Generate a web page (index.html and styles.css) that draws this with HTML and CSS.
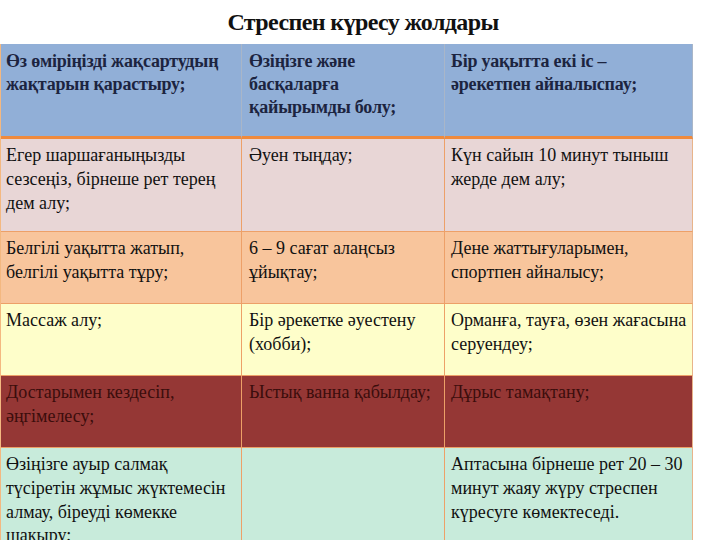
FILE: index.html
```html
<!DOCTYPE html>
<html>
<head>
<meta charset="utf-8">
<link rel="stylesheet" href="styles.css">
</head>
<body>
<h1 class="title">Стреспен күресу жолдары</h1>
<div class="grid">
  <div class="cell head">Өз өміріңізді жақсартудың жақтарын қарастыру;</div>
  <div class="cell head">Өзіңізге және басқаларға қайырымды болу;</div>
  <div class="cell head">Бір уақытта екі іс – әрекетпен айналыспау;</div>

  <div class="cell r2">Егер шаршағаныңызды сезсеңіз, бірнеше рет терең дем алу;</div>
  <div class="cell r2">Әуен тыңдау;</div>
  <div class="cell r2">Күн сайын 10 минут тыныш жерде дем алу;</div>

  <div class="cell r3">Белгілі уақытта жатып, белгілі уақытта тұру;</div>
  <div class="cell r3">6 – 9 сағат алаңсыз ұйықтау;</div>
  <div class="cell r3">Дене жаттығуларымен, спортпен айналысу;</div>

  <div class="cell r4">Массаж алу;</div>
  <div class="cell r4">Бір әрекетке әуестену (хобби);</div>
  <div class="cell r4">Орманға, тауға, өзен жағасына серуендеу;</div>

  <div class="cell r5">Достарымен кездесіп, әңгімелесу;</div>
  <div class="cell r5">Ыстық ванна қабылдау;</div>
  <div class="cell r5">Дұрыс тамақтану;</div>

  <div class="cell r6">Өзіңізге ауыр салмақ түсіретін жұмыс жүктемесін алмау, біреуді көмекке шақыру;</div>
  <div class="cell r6"></div>
  <div class="cell r6">Аптасына бірнеше рет 20 – 30 минут жаяу жүру стреспен күресуге көмектеседі.</div>
</div>
</body>
</html>
```
FILE: styles.css
```css
html, body {
  margin: 0;
  padding: 0;
  background: #ffffff;
  overflow: hidden;
}
body {
  width: 720px;
  height: 540px;
  font-family: "Liberation Serif", "DejaVu Serif", "Times New Roman", serif;
}
.title {
  margin: 0;
  height: 44px;
  box-sizing: border-box;
  padding-top: 8px;
  padding-left: 6px;
  text-align: center;
  font-size: 24px;
  line-height: 28px;
  font-weight: bold;
  letter-spacing: -0.6px;
  color: #111111;
}
.grid {
  width: 692px;
  display: grid;
  grid-template-columns: 241px 203px 248px;
  grid-template-rows: 95px 93px 72px 72px 72px 100px;
  background: #f2a560;
  border-left: 1px solid #f4b880;
  box-sizing: border-box;
}
.cell {
  box-sizing: border-box;
  padding: 5px 3px 0 5px;
  font-size: 18px;
  line-height: 23.8px;
  color: #111111;
  border-right: 1.5px solid #eda068;
  border-bottom: 1.5px solid #eda068;
  overflow: hidden;
}
.cell:nth-child(3n+2) {
  padding-left: 7px;
}
.cell:nth-child(3n) {
  padding-left: 6px;
  padding-right: 1px;
  border-right: 1px solid #e8b48a;
}
.cell.head {
  background: #91afd7;
  color: #1c2440;
  font-weight: bold;
  font-size: 18px;
  line-height: 23px;
  letter-spacing: -0.2px;
  padding-top: 6px;
  padding-right: 10px;
  border-right-color: #a9b6c8;
  border-bottom: 3px solid #f08a3c;
}
.r2 { background: #e8d6d6; }
.r3 { background: #f8c59c; }
.r4 { background: #fefeca; }
.r5 { background: #953735; color: #3b0d0c; }
.r6 { background: #c8ebdb; border-bottom: none; }
```
